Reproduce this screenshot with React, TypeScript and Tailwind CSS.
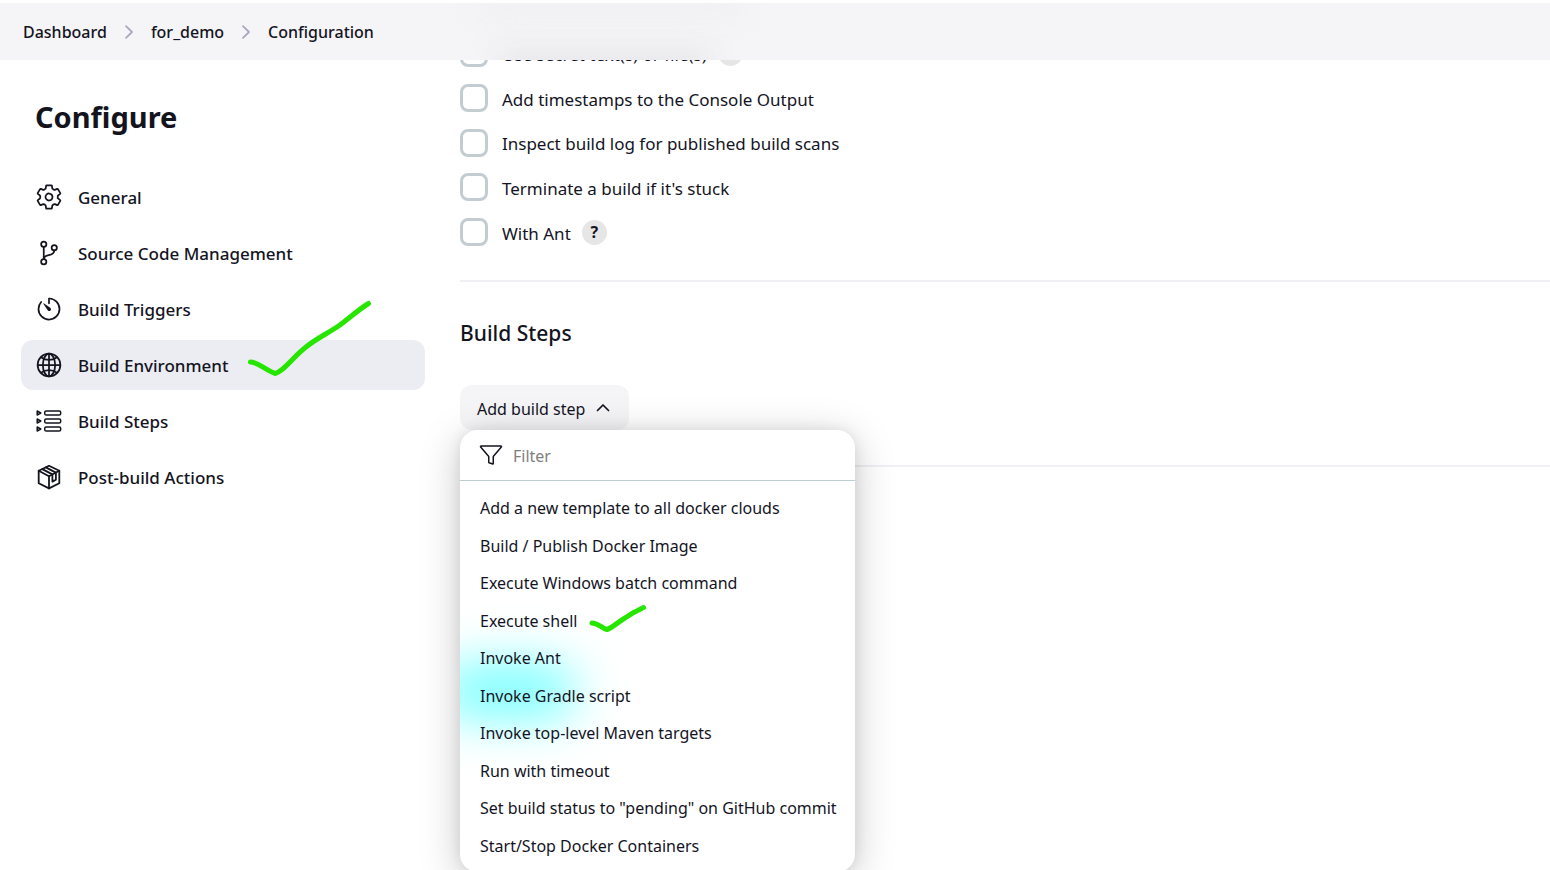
import type { ReactNode } from "react";
import {
  IoFunnelOutline,
  IoGitBranchOutline,
  IoGlobeOutline,
  IoSettingsOutline,
  IoTimerOutline,
} from "react-icons/io5";

function StepsIcon() {
  return (
    <svg viewBox="0 0 28 28" className="size-7" fill="none" stroke="currentColor" strokeWidth="1.5" strokeLinejoin="round">
      {[6, 14, 22].map((y) => (
        <g key={y}>
          <path d={`M2.2 ${y - 2}v4L5.8 ${y}Z`} />
          <rect x="9.7" y={y - 2} width="16" height="4" rx="1.6" />
        </g>
      ))}
    </svg>
  );
}

function PackageIcon() {
  return (
    <svg viewBox="0 0 28 28" className="size-7" fill="none" stroke="currentColor" strokeWidth="1.8" strokeLinejoin="round" strokeLinecap="round">
      <path d="M14 2.8 24.3 7.8V20.2L14 25.400 3.700 20.2V7.8Z" />
      <path d="M3.700 7.8 14 13.2 24.3 7.8M14 13.2V25.400" />
      <path d="M10.800 4.4 20.9 9.600V16.6L17.400 18.600V11.400L7.300 6.100" />
    </svg>
  );
}

function CheckMark({ className, viewBox, d }: { className: string; viewBox: string; d: string }) {
  return (
    <svg aria-hidden="true" viewBox={viewBox} className={className} fill="none" stroke="#26e600" strokeWidth="5" strokeLinecap="round" strokeLinejoin="round">
      <path d={d} />
    </svg>
  );
}

const sections: { label: string; icon: ReactNode; active?: boolean }[] = [
  { label: "General", icon: <IoSettingsOutline className="size-7" /> },
  { label: "Source Code Management", icon: <IoGitBranchOutline className="size-7" /> },
  { label: "Build Triggers", icon: <IoTimerOutline className="size-7" /> },
  { label: "Build Environment", icon: <IoGlobeOutline className="size-7" />, active: true },
  { label: "Build Steps", icon: <StepsIcon /> },
  { label: "Post-build Actions", icon: <PackageIcon /> },
];

const options: { label: string; help?: boolean }[] = [
  { label: "Use secret text(s) or file(s)", help: true },
  { label: "Add timestamps to the Console Output" },
  { label: "Inspect build log for published build scans" },
  { label: "Terminate a build if it's stuck" },
  { label: "With Ant", help: true },
];

const steps = [
  "Add a new template to all docker clouds",
  "Build / Publish Docker Image",
  "Execute Windows batch command",
  "Execute shell",
  "Invoke Ant",
  "Invoke Gradle script",
  "Invoke top-level Maven targets",
  "Run with timeout",
  'Set build status to "pending" on GitHub commit',
  "Start/Stop Docker Containers",
];

function Separator() {
  return (
    <svg aria-hidden="true" viewBox="0 0 10 16" className="h-4 w-[10px]" fill="none" stroke="#a9a9bd" strokeWidth="1.8" strokeLinecap="round" strokeLinejoin="round">
      <path d="M2 2.2 8 8l-6 5.8" />
    </svg>
  );
}

function Breadcrumbs() {
  return (
    <header className="relative z-10 mt-[3px] flex h-[57px] shrink-0 items-center overflow-hidden bg-[#f5f5f8] px-[23px]">
      <div className="absolute -top-2 left-[480px] h-5 w-[260px] bg-[#eeeef1] blur-lg" />
      <div className="absolute -bottom-4 left-[500px] h-5 w-[210px] bg-[#dfdfe3] blur-lg" />
      <nav aria-label="Breadcrumb">
        <ol className="flex items-center gap-[17px] text-[16px] font-medium">
          <li><a href="#dashboard">Dashboard</a></li>
          <li><Separator /></li>
          <li><a href="#for_demo">for_demo</a></li>
          <li><Separator /></li>
          <li><a href="#configuration">Configuration</a></li>
        </ol>
      </nav>
    </header>
  );
}

function Sidebar() {
  return (
    <aside className="w-[425px] shrink-0 pt-[35px] pl-[21px]">
      <h1 className="pl-[14px] text-[29px] leading-[44px] font-bold">Configure</h1>
      <nav aria-label="Configure" className="mt-[33px]">
        <ul className="flex flex-col gap-[6px]">
          {sections.map((s) => (
            <li key={s.label} className="relative">
              <a
                href="#section"
                aria-current={s.active ? "true" : undefined}
                className={`flex h-[50px] items-center gap-[15px] rounded-xl pl-[14px] text-[17px] font-medium ${s.active ? "bg-[#ecedf3]" : ""}`}
              >
                {s.icon}
                <span className="pt-[2px]">{s.label}</span>
              </a>
              {s.active && (
                <CheckMark
                  className="absolute -top-10 left-[225px] h-[80px] w-[130px]"
                  viewBox="246 300 130 80"
                  d="M250.500 362C258 362 264 369 275 373.500C283 372 293 357 306 347C317 338 327 334 340 325C352 316 358 310 368.500 303.500"
                />
              )}
            </li>
          ))}
        </ul>
      </nav>
    </aside>
  );
}

function BuildStepMenu() {
  return (
    <div className="absolute top-full left-0 w-[395px] rounded-[18px] bg-white pb-2 shadow-[0_8px_40px_rgba(0,0,0,0.22),0_0_14px_rgba(0,0,0,0.08)]">
      <div className="pointer-events-none absolute inset-0 overflow-hidden rounded-[18px]">
        <div className="absolute top-[232px] -left-5 h-[58px] w-[136px] rounded-full bg-[#7dffff] blur-xl" />
      </div>
      <div className="relative flex h-[51px] items-center gap-[10px] border-b border-[#bccdd3] pl-[19px]">
        <IoFunnelOutline className="size-6 shrink-0" />
        <input
          type="text"
          aria-label="Filter build steps"
          placeholder="Filter"
          className="h-full w-full bg-transparent pt-px pr-5 text-[16px] outline-none placeholder:text-[#808080]"
        />
      </div>
      <ul className="relative mt-2 grid h-[375px] grid-rows-10">
        {steps.map((step) => (
          <li key={step} className="relative flex">
            <button type="button" className="w-full px-5 pt-px text-left text-[16px] whitespace-nowrap">
              {step}
            </button>
            {step === "Execute shell" && (
              <CheckMark
                className="absolute top-[1px] left-[126px] h-[32px] w-[64px]"
                viewBox="586 603 64 32"
                d="M592 623C598 623 601 628 607 629.500C612 628 618 622 625 618C632 613 636 611 643.500 607.500"
              />
            )}
          </li>
        ))}
      </ul>
    </div>
  );
}

export default function App() {
  return (
    <div className="flex h-screen flex-col overflow-hidden bg-white font-['Noto_Sans',sans-serif] text-[#14141f]">
      <Breadcrumbs />
      <div className="flex">
        <Sidebar />
        <main className="-mt-[21px] ml-[35px] min-w-0 flex-1">
          <div className="flex h-[207px] flex-col justify-between">
            {options.map((o, i) => (
              <div key={o.label} className="flex h-7 items-center">
                <input id={`option-${i}`} type="checkbox" className="size-7 appearance-none rounded-lg border-[3px] border-[#c3cdd1]" />
                <label htmlFor={`option-${i}`} className="pt-[3px] pl-[14px] text-[17px]">{o.label}</label>
                {o.help && (
                  <button type="button" aria-label={`Help for ${o.label}`} className="ml-[11px] size-[25px] rounded-full bg-[#e6e6e6] text-[16px] leading-[25px] font-bold">
                    ?
                  </button>
                )}
              </div>
            ))}
          </div>
          <section className="mt-[34px] border-y-2 border-[#f0f0f4] pt-[34px] pb-[35px]">
            <h2 className="text-[21px] leading-[34px] font-medium">Build Steps</h2>
            <div className="relative mt-[35px] w-fit">
              <button type="button" aria-expanded="true" className="flex h-[45px] items-center gap-[11px] rounded-xl bg-[#f5f5f8] pr-[19px] pl-[17px] text-[16px]">
                <span className="pt-[2px]">Add build step</span>
                <svg aria-hidden="true" viewBox="0 0 14 10" className="h-[10px] w-[14px]" fill="none" stroke="currentColor" strokeWidth="1.7" strokeLinecap="round" strokeLinejoin="round">
                  <path d="M1.5 7.5 7 2l5.5 5.5" />
                </svg>
              </button>
              <BuildStepMenu />
            </div>
          </section>
        </main>
      </div>
    </div>
  );
}
